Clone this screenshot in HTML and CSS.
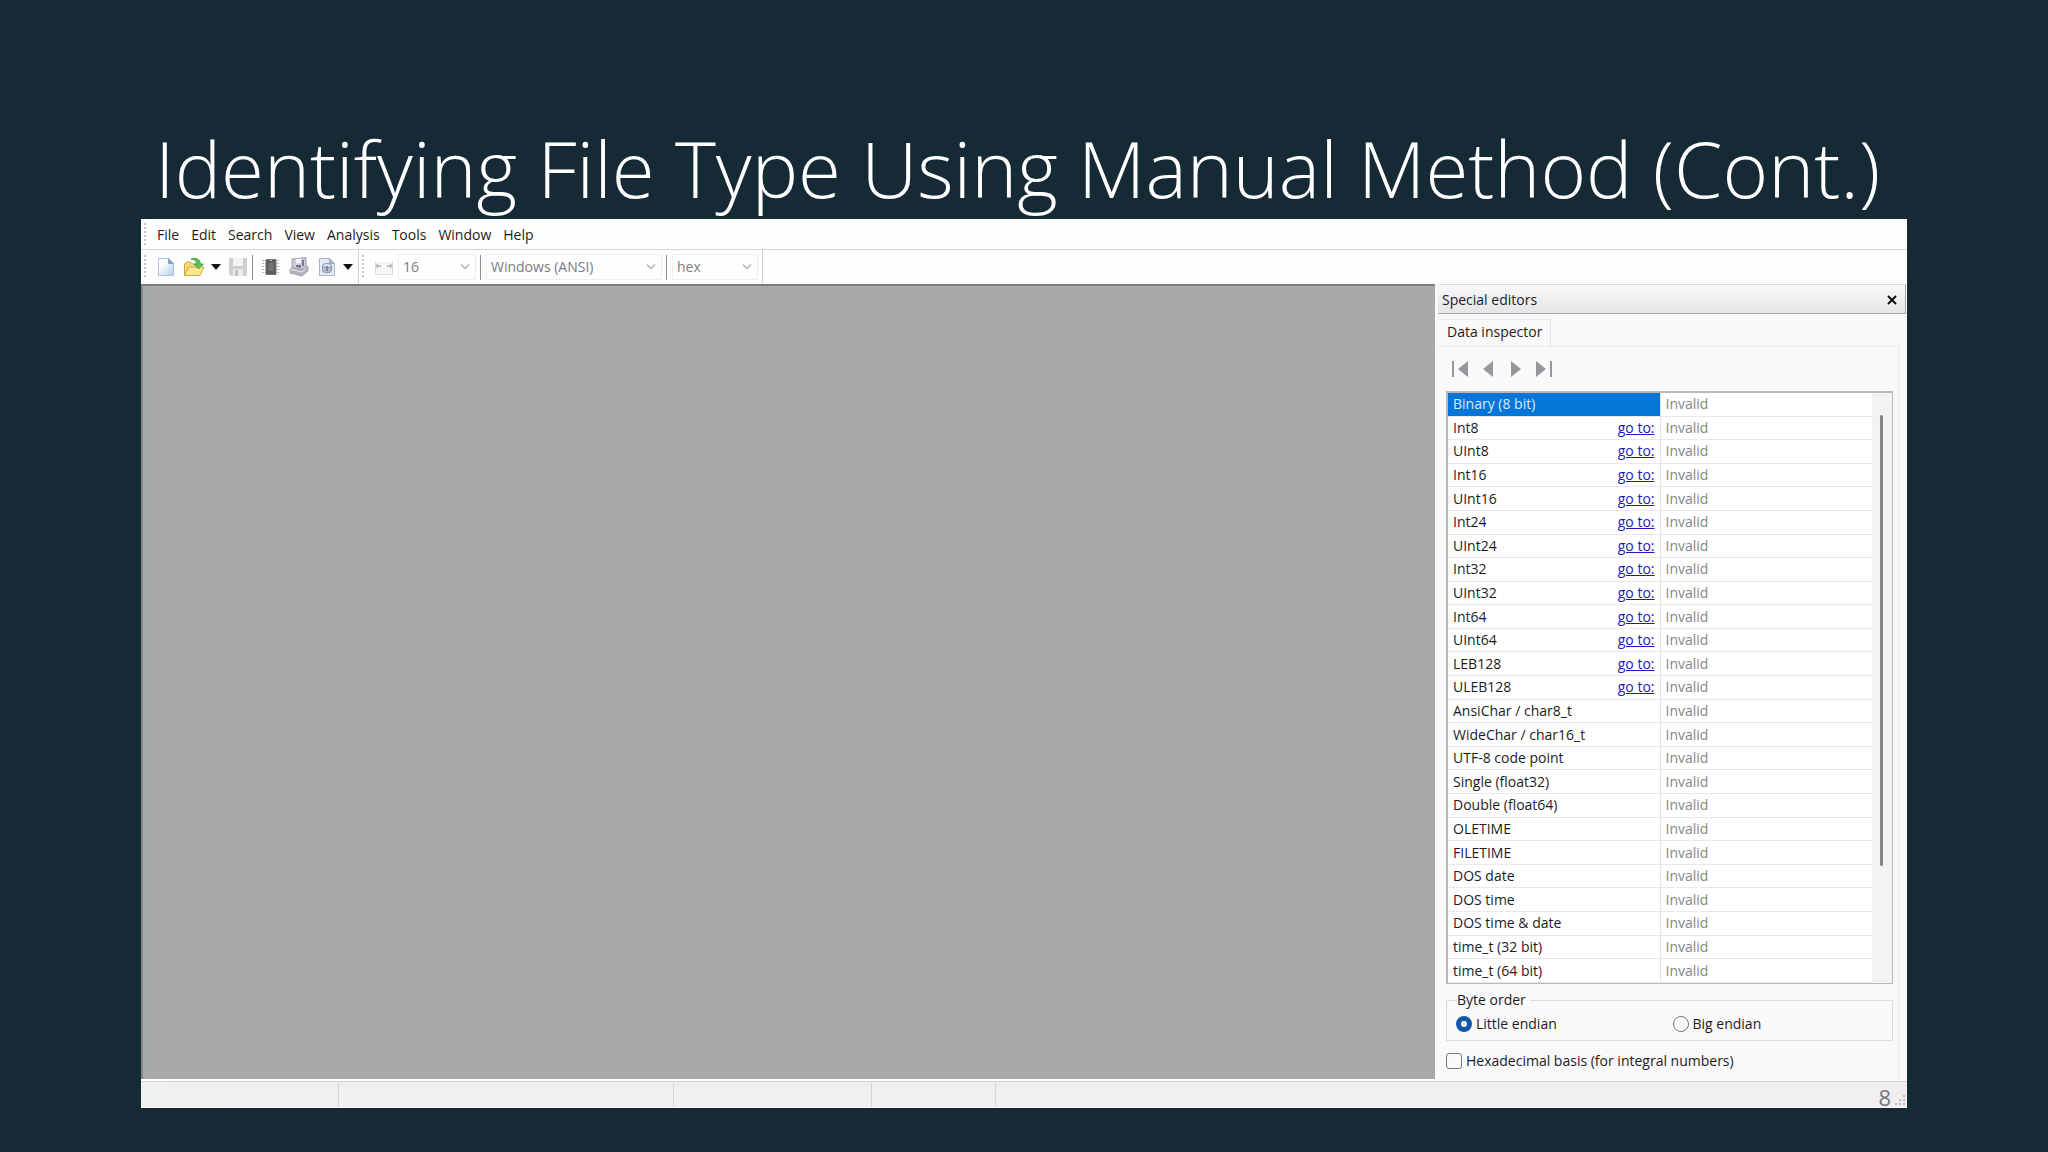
FILE: index.html
```html
<!DOCTYPE html>
<html lang="en">
<head>
  <meta charset="UTF-8">
  <meta name="viewport" content="width=device-width, initial-scale=1.0">
  <title>Identifying File Type Using Manual Method (Cont.)</title>
  <link rel="stylesheet" href="styles.css">
</head>
<body>
  <div class="slide">
    <h1 class="slide-title">Identifying File Type Using Manual Method (Cont.)</h1>

    <div class="window">
      <!-- Menu bar -->
      <div class="menubar">
        <span class="grip"></span>
        <button>File</button>
        <button>Edit</button>
        <button>Search</button>
        <button>View</button>
        <button>Analysis</button>
        <button>Tools</button>
        <button>Window</button>
        <button>Help</button>
      </div>

      <!-- Toolbars -->
      <div class="toolbars">
        <div class="toolbar files">
          <span class="grip"></span>
          <button class="tool" aria-label="New">
            <svg width="20" height="20" viewBox="0 0 20 20">
              <defs>
                <linearGradient id="paper" x1="0" y1="0" x2="1" y2="1">
                  <stop offset="0.3" stop-color="#fbfdff"/>
                  <stop offset="1" stop-color="#b4cdf0"/>
                </linearGradient>
              </defs>
              <path d="M2.500 1.500h10l5 5v12h-15z" fill="url(#paper)" stroke="#b4c1d4"/>
              <path d="M12.500 1.500v5h5z" fill="#7f9fd0" stroke="#8fa6c8"/>
            </svg>
          </button>
          <button class="tool" aria-label="Open">
            <svg width="22" height="20" viewBox="0 0 22 20">
              <path d="M1.500 18v-11l2-2h4l2 2h7v4" fill="#f3d977" stroke="#cda63c"/>
              <path d="M1.500 18.500l4-8.500h15.500l-4 8.500z" fill="#fbe88e" stroke="#d0a93f"/>
              <path d="M8 2c5-2 9 0 9.500 5h3l-5 5-4.500-5h3c-.5-3-2.500-4.500-6-5z" fill="#5fc04f" stroke="#3d9b3c" stroke-width=".8"/>
            </svg>
          </button>
          <button class="drop" aria-label="Recent files">
            <svg width="10" height="6" viewBox="0 0 10 6"><path d="M0 0h10l-5 6z" fill="#111"/></svg>
          </button>
          <button class="tool" aria-label="Save" disabled>
            <svg width="20" height="20" viewBox="0 0 20 20">
              <path d="M1 1h18v18h-16l-2-2z" fill="#cfcfd1"/>
              <path d="M5 1h10v8h-10z" fill="#f3f3f4"/>
              <path d="M5 12h10v7h-10z" fill="#e9e9ea"/>
              <path d="M7 13h3v6h-3z" fill="#c0c0c3"/>
            </svg>
          </button>
          <span class="separator"></span>
          <button class="tool" aria-label="Open RAM">
            <svg width="20" height="20" viewBox="0 0 20 20">
              <path d="M1 3.500h18M1 6.500h18M1 9.500h18M1 12.500h18M1 15.500h18" stroke="#b4b4b6" stroke-dasharray="2 1"/>
              <path d="M5 2.500h10v15h-10z" fill="#5c5c5e" stroke="#77777a"/>
              <path d="M7.500 6h5v8h-5z" fill="#747477"/>
              <path d="M9 3.500h2" stroke="#bbb"/>
            </svg>
          </button>
          <button class="tool" aria-label="Open disk">
            <svg width="22" height="20" viewBox="0 0 22 20">
              <path d="M2 12l4-3h14v5l-6 5-12-3z" fill="#b3b3ba" stroke="#97979f" stroke-width=".8"/>
              <path d="M2 12l12 3 6-6" fill="none" stroke="#ececf4"/>
              <path d="M4 2l14-1.500v10l-5 2-9-2z" fill="#cccbdb" stroke="#9090a5" stroke-width=".8"/>
              <path d="M8 2l5-.5v4.500l-5 .5z" fill="#f3f3fa"/>
              <path d="M8 8h5v3l-5-1z" fill="#77778b"/>
              <path d="M15 3v6" stroke="#77759a" stroke-width="2"/>
            </svg>
          </button>
          <button class="tool" aria-label="Open disk image">
            <svg width="20" height="20" viewBox="0 0 20 20">
              <path d="M2.500 1.500h10l5 5v12h-15z" fill="#e4ecf7" stroke="#a9b3c4"/>
              <path d="M12.500 1.500v5h5z" fill="#9fb2d0" stroke="#9fadc4"/>
              <path d="M5.500 8.500v5c0 3 9 3 9 0v-5z" fill="#b3bccb" stroke="#8c96a8"/>
              <ellipse cx="10" cy="8.500" rx="4.500" ry="2" fill="#dde3ee" stroke="#8c96a8"/>
              <path d="M10 9v5" stroke="#7b879d" stroke-width="2"/>
            </svg>
          </button>
          <button class="drop" aria-label="More images">
            <svg width="10" height="6" viewBox="0 0 10 6"><path d="M0 0h10l-5 6z" fill="#111"/></svg>
          </button>
        </div>

        <div class="toolbar options">
          <span class="grip"></span>
          <button class="tool" aria-label="Fit bytes per row" disabled>
            <svg width="20" height="20" viewBox="0 0 20 20">
              <path d="M1.500 5v12.500h17v-12.500" fill="#f7f6f7" stroke="#dddcde"/>
              <path d="M1 9l3-3v2h3v2h-3v2zM19 9l-3-3v2h-3v2h3v2z" fill="#bdbcbf"/>
            </svg>
          </button>
          <span class="combo combo-row">
            <select aria-label="Bytes per row" disabled><option>16</option></select>
            <svg width="10" height="6" viewBox="0 0 10 6"><path d="M1 0.500l4 4 4-4" fill="none" stroke="#b5b5b7" stroke-width="1.500"/></svg>
          </span>
          <span class="separator"></span>
          <span class="combo combo-charset">
            <select aria-label="Character set" disabled><option>Windows (ANSI)</option></select>
            <svg width="10" height="6" viewBox="0 0 10 6"><path d="M1 0.500l4 4 4-4" fill="none" stroke="#b5b5b7" stroke-width="1.500"/></svg>
          </span>
          <span class="separator"></span>
          <span class="combo combo-base">
            <select aria-label="Offset base" disabled><option>hex</option></select>
            <svg width="10" height="6" viewBox="0 0 10 6"><path d="M1 0.500l4 4 4-4" fill="none" stroke="#b5b5b7" stroke-width="1.500"/></svg>
          </span>
        </div>
      </div>

      <div class="main">
        <div class="workspace"></div>

        <!-- Special editors panel -->
        <div class="panel">
          <div class="panel-header">
            <span>Special editors</span>
            <button class="close" aria-label="Close">
              <svg width="10" height="10" viewBox="0 0 10 10"><path d="M1 1l8 8M9 1l-8 8" stroke="#111" stroke-width="2"/></svg>
            </button>
          </div>
          <div class="tabs">
            <button class="tab">Data inspector</button>
          </div>
          <div class="tab-page">
            <div class="nav">
              <button aria-label="First" disabled>
                <svg width="18" height="18" viewBox="0 0 18 18"><path d="M1 1h2v16h-2zM17 1v16l-10-8z" fill="#97969a"/></svg>
              </button>
              <button aria-label="Previous" disabled>
                <svg width="18" height="18" viewBox="0 0 18 18"><path d="M14 1v16l-10-8z" fill="#97969a"/></svg>
              </button>
              <button aria-label="Next" disabled>
                <svg width="18" height="18" viewBox="0 0 18 18"><path d="M4 1v16l10-8z" fill="#97969a"/></svg>
              </button>
              <button aria-label="Last" disabled>
                <svg width="18" height="18" viewBox="0 0 18 18"><path d="M15 1h2v16h-2zM1 1v16l10-8z" fill="#97969a"/></svg>
              </button>
            </div>

            <div class="inspector">
              <table>
                <tr class="selected"><td>Binary (8 bit)</td><td>Invalid</td></tr>
                <tr><td>Int8 <a href="#">go to:</a></td><td>Invalid</td></tr>
                <tr><td>UInt8 <a href="#">go to:</a></td><td>Invalid</td></tr>
                <tr><td>Int16 <a href="#">go to:</a></td><td>Invalid</td></tr>
                <tr><td>UInt16 <a href="#">go to:</a></td><td>Invalid</td></tr>
                <tr><td>Int24 <a href="#">go to:</a></td><td>Invalid</td></tr>
                <tr><td>UInt24 <a href="#">go to:</a></td><td>Invalid</td></tr>
                <tr><td>Int32 <a href="#">go to:</a></td><td>Invalid</td></tr>
                <tr><td>UInt32 <a href="#">go to:</a></td><td>Invalid</td></tr>
                <tr><td>Int64 <a href="#">go to:</a></td><td>Invalid</td></tr>
                <tr><td>UInt64 <a href="#">go to:</a></td><td>Invalid</td></tr>
                <tr><td>LEB128 <a href="#">go to:</a></td><td>Invalid</td></tr>
                <tr><td>ULEB128 <a href="#">go to:</a></td><td>Invalid</td></tr>
                <tr><td>AnsiChar / char8_t</td><td>Invalid</td></tr>
                <tr><td>WideChar / char16_t</td><td>Invalid</td></tr>
                <tr><td>UTF-8 code point</td><td>Invalid</td></tr>
                <tr><td>Single (float32)</td><td>Invalid</td></tr>
                <tr><td>Double (float64)</td><td>Invalid</td></tr>
                <tr><td>OLETIME</td><td>Invalid</td></tr>
                <tr><td>FILETIME</td><td>Invalid</td></tr>
                <tr><td>DOS date</td><td>Invalid</td></tr>
                <tr><td>DOS time</td><td>Invalid</td></tr>
                <tr><td>DOS time &amp; date</td><td>Invalid</td></tr>
                <tr><td>time_t (32 bit)</td><td>Invalid</td></tr>
                <tr><td>time_t (64 bit)</td><td>Invalid</td></tr>
              </table>
              <div class="scrollbar"><div class="thumb"></div></div>
            </div>

            <fieldset class="byte-order">
              <legend>Byte order</legend>
              <label><input type="radio" name="order" checked>Little endian</label>
              <label><input type="radio" name="order">Big endian</label>
            </fieldset>
            <label class="hex-basis"><input type="checkbox">Hexadecimal basis (for integral numbers)</label>
          </div>
        </div>
      </div>

      <!-- Status bar -->
      <div class="statusbar">
        <span></span>
        <span></span>
        <span></span>
        <span></span>
        <span class="slide-number">8</span>
        <svg width="12" height="12" viewBox="0 0 12 12"><path d="M9 0h2v2h-2zM5 4h2v2h-2zM9 4h2v2h-2zM1 8h2v2h-2zM5 8h2v2h-2zM9 8h2v2h-2z" fill="#bdbcc0"/></svg>
      </div>
    </div>
  </div>
</body>
</html>
```
FILE: styles.css
```css
* {
  box-sizing: border-box;
}

body {
  margin: 0;
  background-color: #152a35;
  font-family: "Open Sans", "Noto Sans", sans-serif;
  font-size: 14px;
  line-height: 20px;
  color: #1c1c1e;
}

button {
  padding: 0;
  border: none;
  background: none;
  font: inherit;
  color: inherit;
}

svg {
  display: block;
}

.slide {
  display: flex;
  flex-direction: column;
  height: 100vh;
  min-height: 900px;
  padding: 117px 141px 44px;
}

.slide-title {
  margin: 0;
  padding-left: 14px;
  font-size: 78px;
  font-weight: 300;
  line-height: 102px;
  white-space: nowrap;
  color: #fff;
}

.window {
  flex: 1;
  display: flex;
  flex-direction: column;
  min-height: 0;
  background-color: #fefefe;
}

/* Menu bar */
.menubar {
  display: flex;
  align-items: center;
  gap: 12px;
  height: 31px;
  padding-top: 1px;
  border-bottom: 1px solid #d4d3d5;
}

.grip {
  width: 2px;
  height: 24px;
  margin-left: 3px;
  background: repeating-linear-gradient(#c4c3c6 0 2px, transparent 2px 4px);
}

.menubar .grip {
  margin-right: -1px;
}

/* Toolbars */
.toolbars {
  display: flex;
  height: 34px;
}

.toolbar {
  display: flex;
  align-items: center;
  border-right: 1px solid #d0cfd2;
}

.files {
  width: 218px;
}

.tool {
  margin-left: 7px;
}

.grip + .tool {
  margin-left: 10px;
}

.drop {
  margin-left: 6px;
}

.separator {
  width: 1px;
  height: 25px;
  margin: 0 5px 0 4px;
  background-color: #8d8c90;
}

.separator + .tool {
  margin-left: 3px;
}

.combo {
  display: grid;
  align-items: center;
  height: 26px;
  border: 1px solid #efeef0;
}

.combo select,
.combo svg {
  grid-area: 1 / 1;
}

.combo select {
  width: 100%;
  padding: 0 4px;
  border: none;
  background: none;
  appearance: none;
  font: inherit;
  color: #7d7c80;
  opacity: 1;
}

.combo svg {
  justify-self: end;
  margin-right: 5px;
}

.combo-row {
  width: 78px;
  margin-left: 4px;
}

.combo-charset {
  width: 176px;
}

.combo-base {
  width: 86px;
  margin-right: 4px;
}

/* Workspace */
.main {
  flex: 1;
  display: flex;
  min-height: 0;
}

.workspace {
  flex: 1;
  margin-bottom: 2px;
  border-top: 2px solid #7d7c7f;
  border-left: 2px solid #868788;
  background: linear-gradient(to right, #a6aaa6, #aaa8aa 90px);
}

/* Special editors */
.panel {
  display: flex;
  flex-direction: column;
  width: 472px;
  padding: 0 1px 2px 3px;
  background-color: #f9f8fb;
}

.panel-header {
  display: flex;
  align-items: center;
  justify-content: space-between;
  height: 30px;
  padding: 1px 8px 0 4px;
  border-top: 1px solid #dddcdf;
  border-right: 1px solid #a9a8ab;
  border-bottom: 1px solid #a9a8ab;
  background: linear-gradient(#f9f8fa, #e5e4e7);
}

.tabs {
  display: flex;
  padding-top: 5px;
}

.tab {
  height: 27px;
  padding: 0 8px 2px 9px;
  border-top: 1px solid #ecebee;
  border-right: 1px solid #e2e1e4;
}

.tab-page {
  flex: 1;
  display: flex;
  flex-direction: column;
  min-height: 0;
  margin-right: 6px;
  padding: 0 5px 8px 8px;
  border-right: 2px solid #f0eff2;
  border-top: 1px solid #ecebee;
}

.nav {
  display: flex;
  gap: 10px;
  padding: 13px 5px;
}

.inspector {
  flex: 1;
  display: flex;
  min-height: 0;
  border: 2px solid #b9b8bb;
  border-right-width: 1px;
  border-bottom-width: 1px;
  background-color: #f3f2f5;
}

.inspector table {
  flex: 1;
  width: 100%;
  height: 100%;
  table-layout: fixed;
  border-collapse: collapse;
  background-color: #fff;
}

.inspector td {
  width: 50%;
  height: 20px;
  padding: 0 5px;
  border-bottom: 1px solid #e9e8eb;
  line-height: 20px;
}

.inspector td + td {
  border-left: 1px solid #e2e1e4;
  color: #868588;
}

.inspector a {
  float: right;
  color: #2418b8;
}

.inspector .selected td:first-child {
  background-color: #0376d8;
  color: #d9ecfc;
}

.scrollbar {
  width: 20px;
  padding: 22px 8px 117px;
}

.thumb {
  width: 3px;
  height: 100%;
  border-radius: 2px;
  background-color: #858487;
}

.byte-order {
  display: grid;
  grid-template-columns: 1fr 1fr;
  gap: 6px;
  margin: 6px 0 0;
  padding: 4px 9px 6px;
  border: 1px solid #dddce0;
}

.byte-order legend {
  padding: 0 4px 0 1px;
}

label {
  display: flex;
  align-items: center;
  gap: 4px;
}

input {
  appearance: none;
  width: 16px;
  height: 16px;
  margin: 0;
  border: 1px solid #78777b;
  background-color: #fafafc;
}

input[type="radio"] {
  border-radius: 50%;
}

input[type="radio"]:checked {
  border: 5px solid #1059a6;
  background-color: #fff;
}

input[type="checkbox"] {
  border-radius: 3px;
}

.hex-basis {
  margin-top: 10px;
}

/* Status bar */
.statusbar {
  display: grid;
  grid-template-columns: 198px 335px 198px 124px 1fr auto;
  align-items: end;
  height: 27px;
  padding-right: 1px;
  border-top: 1px solid #d4d3d6;
  border-bottom: 1px solid #fff;
  background: linear-gradient(to right, #eef2ee, #f0eef1 120px);
}

.statusbar span {
  height: 24px;
  border-right: 1px solid #d6d5d8;
}

.statusbar .slide-number {
  padding-right: 3px;
  border: none;
  font-size: 22px;
  line-height: 28px;
  text-align: right;
  color: #77767a;
}
```
